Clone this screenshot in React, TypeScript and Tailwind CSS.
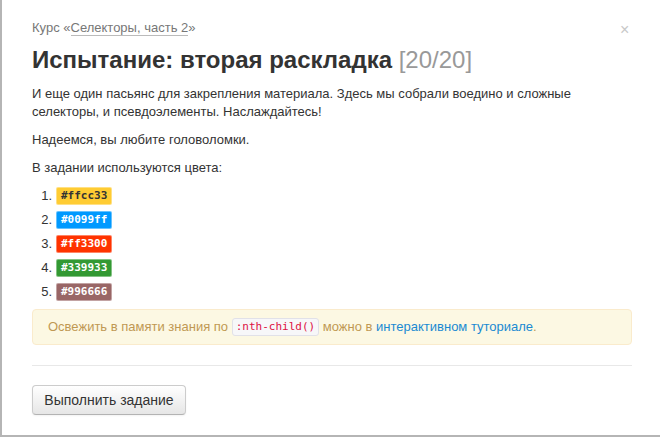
import React from 'react';

const colors = [
  { hex: '#ffcc33', bg: 'bg-[#ffcc33]', text: 'text-[#333]' },
  { hex: '#0099ff', bg: 'bg-[#0099ff]', text: 'text-white' },
  { hex: '#ff3300', bg: 'bg-[#ff3300]', text: 'text-white' },
  { hex: '#339933', bg: 'bg-[#339933]', text: 'text-white' },
  { hex: '#996666', bg: 'bg-[#996666]', text: 'text-white' },
];

const mono = "font-['DejaVu_Sans_Mono','Liberation_Mono',monospace]";

export default function App() {
  return (
    <div className="w-[660px] h-[437px] bg-[#b5b5b5] pl-[2px] pb-[2px] font-['Liberation_Sans',Arial,sans-serif] overflow-hidden">
      {/* Modal */}
      <div className="relative w-full h-full bg-white text-[#333] text-[13px] leading-[18px]">
        <button className="absolute left-[618px] top-[22px] text-[#c8c8c8] text-[16px] leading-none">×</button>

        {/* Header */}
        <div className="pl-[30px] pr-[28px] pt-[19px]">
          <p className="text-[13px] text-[#777] leading-[18px]">
            Курс «<a className="text-[#777] border-b border-[#bbb]">Селекторы, часть 2</a>»
          </p>
          <h1 className="mt-[8px] text-[24px] leading-[30px] font-bold text-[#333]">
            Испытание: вторая раскладка <span className="font-normal text-[#999]">[20/20]</span>
          </h1>
        </div>

        {/* Body */}
        <div className="pl-[30px] pr-[28px] pt-[10px]">
          <p className="w-[570px]">
            И еще один пасьянс для закрепления материала. Здесь мы собрали воедино и сложные
            селекторы, и псевдоэлементы. Наслаждайтесь!
          </p>
          <p className="mt-[10px]">Надеемся, вы любите головоломки.</p>
          <p className="mt-[10px]">В задании используются цвета:</p>

          <ol className="mt-[10px] flex flex-col gap-[6px]">
            {colors.map((c, i) => (
              <li key={c.hex} className="flex items-center h-[18px]">
                <span className="w-[24px] text-right pr-[4px] text-[#333]">{i + 1}.</span>
                <code
                  className={`${mono} ${c.bg} ${c.text} text-[11px] font-semibold leading-[16px] px-[4px] rounded-[2px] border border-white/40`}
                >
                  {c.hex}
                </code>
              </li>
            ))}
          </ol>

          <div className="mt-[8px] w-[600px] h-[36px] flex items-center rounded-[4px] border border-[#faebcc] bg-[#fcf8e3] pl-[15px] text-[#c09853]">
            Освежить в памяти знания по&nbsp;
            <code className={`${mono} text-[11px] leading-[16px] text-[#dd1144] bg-[#f7f7f9] border border-[#e1e1e8] rounded-[3px] px-[3px]`}>
              :nth-child()
            </code>
            &nbsp;можно в&nbsp;<a className="text-[#1a8ad2]">интерактивном туториале</a>.
          </div>

          <hr className="mt-[20px] w-[600px] border-t border-[#e8e8e8]" />

          <button className="mt-[19px] h-[30px] w-[154px] rounded-[4px] border border-[#ccc] border-b-[#b3b3b3] bg-gradient-to-b from-white to-[#e6e6e6] text-[14px] text-[#333] shadow-[inset_0_1px_0_rgba(255,255,255,0.2),0_1px_2px_rgba(0,0,0,0.05)]">
            Выполнить задание
          </button>
        </div>
      </div>
    </div>
  );
}
